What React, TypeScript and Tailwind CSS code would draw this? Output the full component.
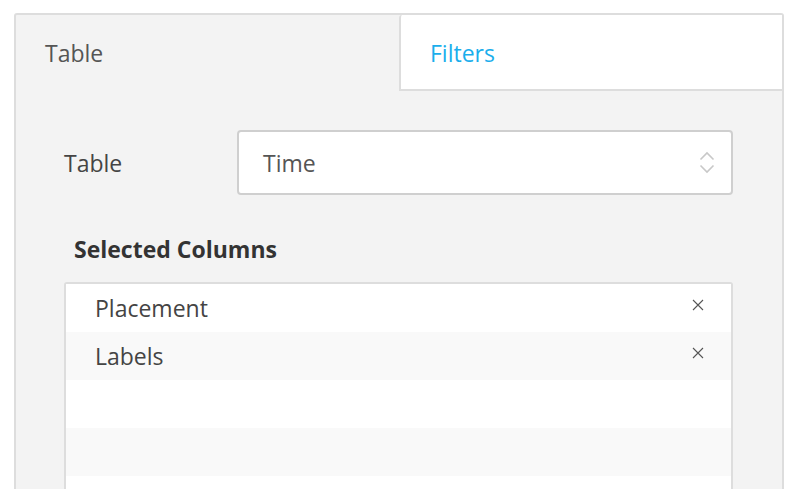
import { memo } from 'react';

const columns = ['Placement', 'Labels', '', '', '', ''];

const CloseIcon = () => (
  <svg width="12" height="12" viewBox="0 0 12 12" fill="none" stroke="#555" strokeWidth="1.1" className="mb-[6px]">
    <path d="M1 1L11 11M11 1L1 11" />
  </svg>
);

const ChevronUpDown = () => (
  <svg width="16" height="24" viewBox="0 0 16 24" fill="none" stroke="#c8c8c8" strokeWidth="1.6">
    <path d="M1.5 8.5L8 2L14.5 8.5" />
    <path d="M1.5 14.5L8 21L14.5 14.5" />
  </svg>
);

const App = memo(() => {
  return (
    <div
      className="w-[796px] h-[489px] overflow-hidden bg-white pl-[14px] pt-[13px]"
      style={{ fontFamily: '"Open Sans", "Noto Sans", sans-serif' }}
    >
      <section className="w-[770px] h-[500px] border-2 border-[#dddddd] rounded-t-[3px] bg-[#f3f3f3]">
        {/* Tabs */}
        <div className="flex h-[76px]">
          <div className="w-[383px] flex items-center pl-[29px] pt-[1px] text-[23px] text-[#555]">
            Table
          </div>
          <div className="flex-1 flex items-center pl-[29px] pt-[2px] bg-white border-l-2 border-b-2 border-[#dddddd] rounded-tl-[3px] text-[23px] text-[#1aaeec]">
            Filters
          </div>
        </div>

        <div className="pl-[48px] pr-[48px] pt-[39px]">
          <div className="flex items-center h-[65px]">
            <span className="w-[173px] text-[23px] text-[#444] pt-[1px]">Table</span>
            <div className="w-[496px] h-[65px] border-2 border-[#cfcfcf] rounded-[4px] bg-white flex items-center justify-between pl-[24px] pr-[16px]">
              <span className="text-[23px] text-[#555] pt-[2px]">Time</span>
              <ChevronUpDown />
            </div>
          </div>

          <h4 className="mt-[40px] ml-[10px] text-[23px] font-bold text-[#333] leading-[28px]">
            Selected Columns
          </h4>

          <ul className="mt-[19px] w-[669px] border-2 border-[#dddddd] rounded-[3px] bg-white">
            {columns.map((name, i) => (
              <li
                key={i}
                className={`h-[48px] flex items-center justify-between pl-[29px] pr-[27px] ${
                  i % 2 === 1 ? 'bg-[#f9f9f9]' : 'bg-white'
                }`}
              >
                <span className="text-[23px] text-[#444]">{name}</span>
                {name && <CloseIcon />}
              </li>
            ))}
          </ul>
        </div>
      </section>
    </div>
  );
});

App.displayName = 'App';

export default App;
